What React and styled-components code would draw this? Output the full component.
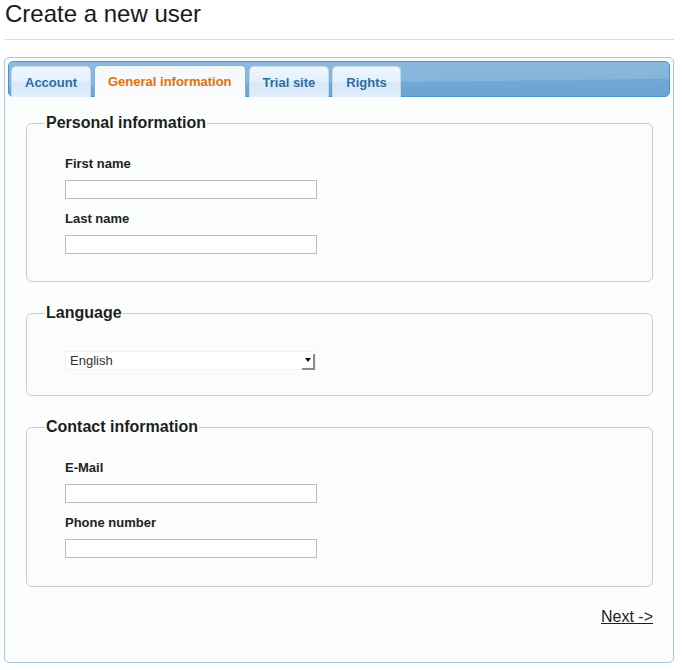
import React, { useState } from "react";
import styled, { createGlobalStyle } from "styled-components";

const GlobalStyle = createGlobalStyle`
  body {
    margin: 0;
    background: #fff;
    font-family: "Liberation Sans", Arial, sans-serif;
    color: #222;
  }
`;

const tabs = ["Account", "General information", "Trial site", "Rights"];

function Field({ label }) {
  return (
    <FieldRow>
      <Label>{label}</Label>
      <TextInput type="text" />
    </FieldRow>
  );
}

export default function App() {
  const [active, setActive] = useState(1);

  return (
    <Page>
      <GlobalStyle />
      <Title>Create a new user</Title>
      <Rule />
      <Panel>
        <TabBar>
          {tabs.map((t, i) => (
            <Tab key={t} $active={i === active} onClick={() => setActive(i)}>
              {t}
            </Tab>
          ))}
        </TabBar>
        <Content>
          <Fieldset $bottom={27}>
            <Legend>Personal information</Legend>
            <Field label="First name" />
            <Field label="Last name" />
          </Fieldset>

          <Fieldset $bottom={25}>
            <Legend>Language</Legend>
            <SelectWrap>
              <Select defaultValue="en">
                <option value="en">English</option>
                <option value="de">Deutsch</option>
                <option value="fr">Français</option>
              </Select>
              <ArrowBox />
            </SelectWrap>
          </Fieldset>

          <Fieldset $bottom={28}>
            <Legend>Contact information</Legend>
            <Field label="E-Mail" />
            <Field label="Phone number" />
          </Fieldset>

          <Footer>
            <NextLink href="#">Next -&gt;</NextLink>
          </Footer>
        </Content>
      </Panel>
    </Page>
  );
}

const Page = styled.div`
  padding: 0 8px 0 4px;
`;

const Title = styled.h1`
  margin: 0 0 0 1px;
  font-size: 24px;
  line-height: 28px;
  font-weight: normal;
  color: #1a1a1a;
`;

const Rule = styled.hr`
  margin: 11px 0 17px 1px;
  border: 0;
  border-top: 1px solid #dcdcdc;
  height: 0;
`;

const Panel = styled.div`
  border: 1px solid #a6c9e2;
  border-radius: 5px;
  padding: 3px;
  background: #fcfdfd;
`;

const TabBar = styled.div`
  display: flex;
  align-items: flex-end;
  height: 36px;
  box-sizing: border-box;
  padding: 4px 2px 0;
  border: 1px solid #4297d7;
  border-radius: 5px;
  background: linear-gradient(
    179.3deg,
    #8dbade 0%,
    #85b4db 58%,
    #71a8d4 60%,
    #6aa3d1 100%
  );
`;

const Tab = styled.div`
  box-sizing: border-box;
  height: ${(p) => (p.$active ? 32 : 31)}px;
  margin: 0 3px -1px 0;
  padding: 0 13px;
  line-height: 31px;
  font-size: 13px;
  font-weight: bold;
  cursor: pointer;
  border: 1px solid ${(p) => (p.$active ? "#79b7e7" : "#c5dbec")};
  border-bottom: 0;
  border-radius: 5px 5px 0 0;
  color: ${(p) => (p.$active ? "#e17009" : "#2e6e9e")};
  background: ${(p) =>
    p.$active
      ? "linear-gradient(#f5f8f9, #fbfcfc)"
      : "linear-gradient(#eef6fe 0%, #e4f0fc 48%, #d8e8f9 52%, #e0eefc 100%)"};
`;

const Content = styled.div`
  padding: 17px 17px 33px 18px;
`;

const Fieldset = styled.fieldset`
  margin: 0 0 22px;
  padding: 0 18px ${(p) => p.$bottom}px 18px;
  border: 1px solid #cccccc;
  border-radius: 6px;
  background: #fbfcfc;
`;

const Legend = styled.legend`
  padding: 0 1px;
  font-size: 16px;
  line-height: 18px;
  font-weight: bold;
  color: #1e1e1e;
`;

const FieldRow = styled.div`
  display: flex;
  flex-direction: column;
  align-items: flex-start;
  padding-left: 20px;
  margin-top: 12px;

  &:first-of-type {
    margin-top: 24px;
  }
`;

const Label = styled.label`
  font-size: 13px;
  line-height: 16px;
  font-weight: bold;
  color: #222;
`;

const TextInput = styled.input`
  box-sizing: border-box;
  width: 252px;
  height: 19px;
  margin: 8px 0 0;
  padding: 0 3px;
  border: 1px solid #bbbbbb;
  border-radius: 0;
  background: #fff;
  font: 13px "Liberation Sans", Arial, sans-serif;
`;

const SelectWrap = styled.div`
  position: relative;
  width: 251px;
  height: 19px;
  margin: 29px 0 0 20px;
`;

const Select = styled.select`
  appearance: none;
  box-sizing: border-box;
  width: 100%;
  height: 100%;
  margin: 0;
  padding: 0 4px;
  border: 1px solid #f3f3f3;
  border-radius: 0;
  background: #fff;
  font: 13px "Liberation Sans", Arial, sans-serif;
  color: #333;
  outline: none;
`;

const ArrowBox = styled.span`
  position: absolute;
  right: 1px;
  top: 3px;
  box-sizing: border-box;
  width: 13px;
  height: 16px;
  background: #fff;
  border-right: 2px solid #8a8a8a;
  border-bottom: 2px solid #8a8a8a;
  pointer-events: none;

  &::after {
    content: "";
    position: absolute;
    left: 3px;
    top: 4px;
    border-left: 3px solid transparent;
    border-right: 3px solid transparent;
    border-top: 4px solid #111;
  }
`;

const Footer = styled.div`
  display: flex;
  justify-content: flex-end;
  margin-top: -1px;
`;

const NextLink = styled.a`
  font-size: 16px;
  line-height: 18px;
  color: #222;
  text-decoration: underline;
`;
